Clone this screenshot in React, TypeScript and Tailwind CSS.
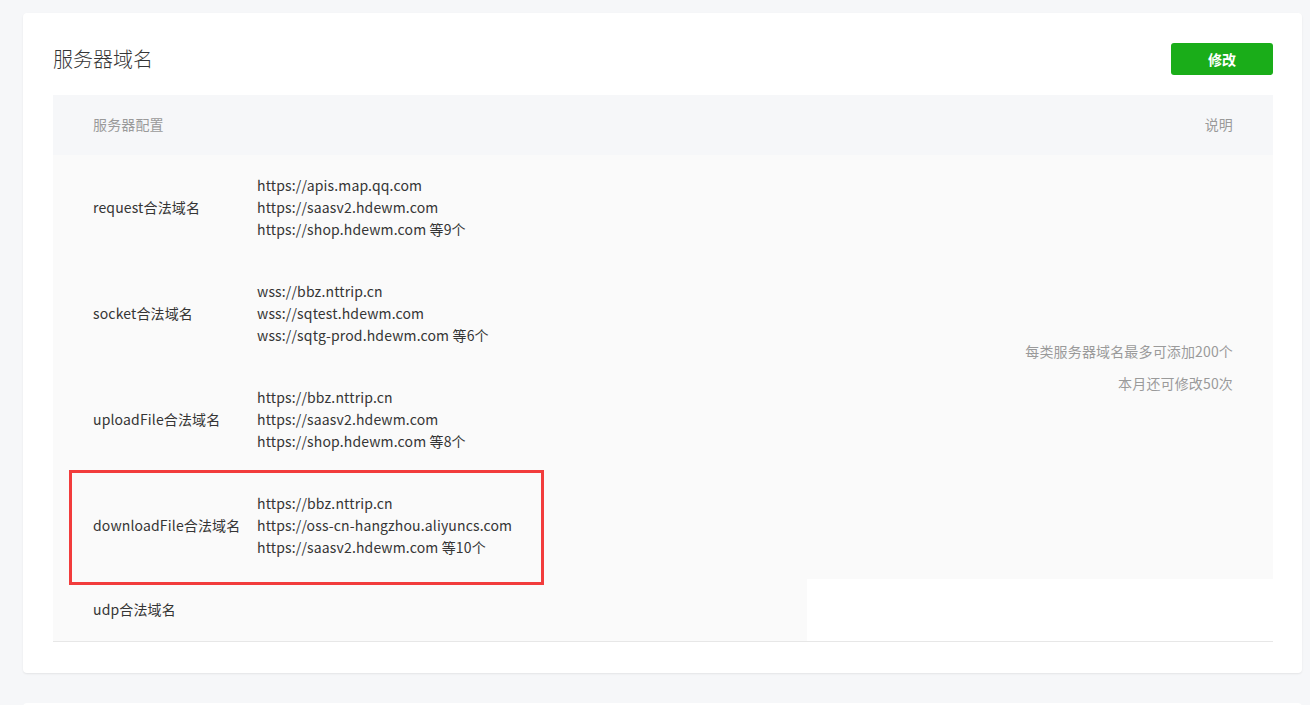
const rows = [
  {
    name: "request合法域名",
    urls: ["https://apis.map.qq.com", "https://saasv2.hdewm.com", "https://shop.hdewm.com 等9个"],
  },
  {
    name: "socket合法域名",
    urls: ["wss://bbz.nttrip.cn", "wss://sqtest.hdewm.com", "wss://sqtg-prod.hdewm.com 等6个"],
  },
  {
    name: "uploadFile合法域名",
    urls: ["https://bbz.nttrip.cn", "https://saasv2.hdewm.com", "https://shop.hdewm.com 等8个"],
  },
  {
    name: "downloadFile合法域名",
    urls: [
      "https://bbz.nttrip.cn",
      "https://oss-cn-hangzhou.aliyuncs.com",
      "https://saasv2.hdewm.com 等10个",
    ],
    marked: true,
  },
];

export default function App() {
  return (
    <div
      className="h-[705px] overflow-hidden bg-[#f6f7f9] pt-[13px] pl-[23px] pr-[8px] text-[#353535]"
      style={{ fontFamily: '"Noto Sans CJK SC", "Noto Sans", sans-serif' }}
    >
      <div className="bg-white rounded shadow-[0_1px_2px_rgba(0,0,0,0.08)] pl-[30px] pr-[29px] pt-[30px] pb-[31px]">
        <div className="flex items-start justify-between h-[52px]">
          <h2 className="text-[20px] leading-[32px] font-light text-[#353535]">服务器域名</h2>
          <button className="w-[102px] h-[32px] rounded-[3px] bg-[#1aad19] text-white text-[14px] font-bold">
            修改
          </button>
        </div>

        <div className="border-b border-[#e7e7e7]">
          <table className="w-full table-fixed border-collapse text-[14px] leading-[22px] tracking-[0.15px]">
            <colgroup>
              <col className="w-[204px]" />
              <col className="w-[550px]" />
              <col />
            </colgroup>
            <thead>
              <tr className="bg-[#f6f7f9] h-[60px] text-[#9a9a9a]">
                <th colSpan={2} className="pl-[40px] pb-[2px] text-left font-normal">
                  服务器配置
                </th>
                <th className="pr-[40px] pb-[2px] text-right font-normal">说明</th>
              </tr>
            </thead>
            <tbody>
              {rows.map((r, i) => (
                <tr key={r.name} className="bg-[#fafafa]">
                  <td className="relative pl-[40px] pt-[19px] pb-[21px] align-middle">
                    {r.marked && (
                      <div className="absolute left-[16px] top-[-3px] w-[475px] h-[115px] border-[3px] border-[#f23c3c] pointer-events-none" />
                    )}
                    {r.name}
                  </td>
                  <td className="pt-[19px] pb-[21px] align-middle">
                    {r.urls.map((u) => (
                      <div key={u}>{u}</div>
                    ))}
                  </td>
                  {i === 0 && (
                    <td rowSpan={4} className="pr-[40px] text-right align-middle text-[#9a9a9a]">
                      <p>每类服务器域名最多可添加200个</p>
                      <p className="mt-[10px]">本月还可修改50次</p>
                    </td>
                  )}
                </tr>
              ))}
              <tr>
                <td className="bg-[#fafafa] pl-[40px] pt-[19px] pb-[21px]">udp合法域名</td>
                <td className="bg-[#fafafa]" />
              </tr>
            </tbody>
          </table>
        </div>
      </div>
      <div className="bg-white rounded mt-[30px] h-[40px]" />
    </div>
  );
}
